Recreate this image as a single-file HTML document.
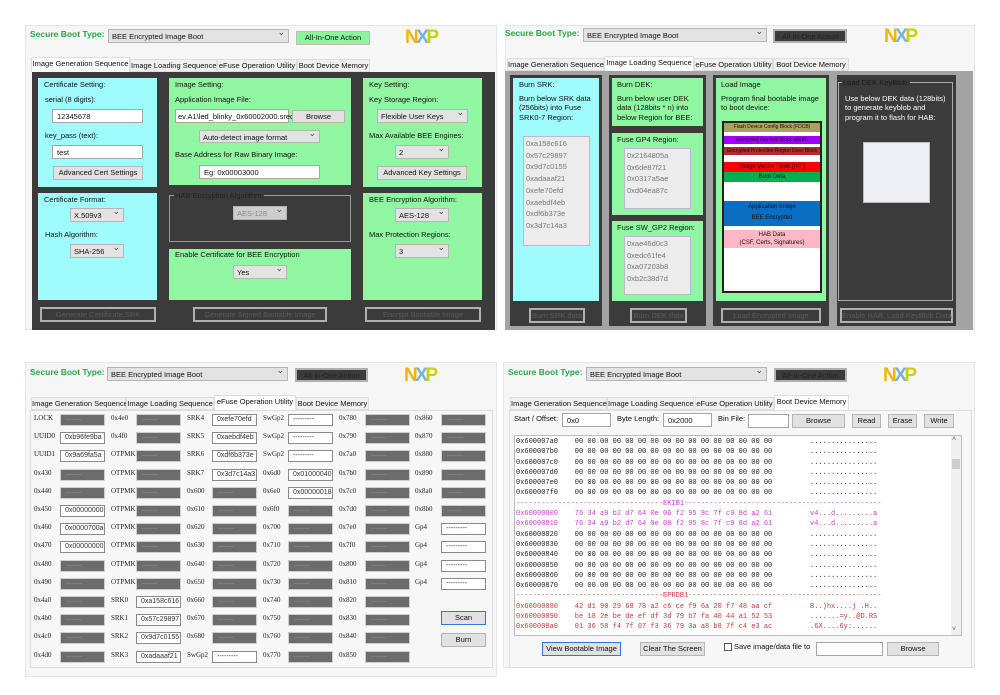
<!DOCTYPE html>
<html><head><meta charset="utf-8"><style>
*{margin:0;padding:0;box-sizing:border-box}
body{width:1000px;height:695px;background:#fff;position:relative;overflow:hidden;font-family:"Liberation Sans",sans-serif;font-size:8px;color:#111}
div,span{position:absolute;white-space:nowrap}
.pn{background:#f6f6f6;border:1px solid #e6e6e6}
.lab{color:#27a745;font-weight:bold;font-size:8.5px}
.cb{background:#e3e3e3;border:1px solid #b5b5b5;height:14px;padding:2px 3px;font-size:7.5px;line-height:9px}
.cb:after{content:"⌄";position:absolute;right:3px;top:-2px;font-size:9px;color:#444}
.ab{height:14px;font-size:7.5px;text-align:center;line-height:11px}
.nxp{font-weight:bold;font-size:19px;letter-spacing:-2.5px;font-family:"Liberation Sans",sans-serif}
.tab{top:0;height:13px;background:#f0f0f0;border:1px solid #ddd;font-size:7.5px;line-height:11px;text-align:center}
.tab.a{background:#fff;height:15px;border-bottom:none}
.cy{background:#a0fbfc}
.gr{background:#90f6a2}
.dk{background:#3b3b3b}
.tx{font-size:7.5px;line-height:9.3px}
.in{background:#fff;border:1px solid #a5a5a5;height:14px;padding:2px 4px;font-size:7.5px;line-height:9px}
.bt{background:#e1e1e1;border:1px solid #b5b5b5;height:14px;font-size:7.5px;line-height:12px;text-align:center}
.db{background:#3b3b3b;border:2px solid #b0b0b0;height:15px;font-size:7.5px;line-height:11px;text-align:center;color:#5a5a5a}
.lb{background:#ececec;border:1px solid #b9b9d0;color:#777;font-size:7.5px;line-height:11.7px;padding:1px 2px}
.fl{font-size:7px;font-family:"Liberation Serif",serif;color:#222}
.k{background:#6c6c6c;border:1px solid #cfcfcf;width:45px;height:12px;font-size:6px;color:#9a9a9a;line-height:10px;padding-left:5px}
.v{background:#fff;border:1px solid #8a8a8a;width:45px;height:12px;font-size:7px;color:#333;line-height:10px;padding-left:4px}
.mono{font-family:"Liberation Mono",monospace;font-size:7px;line-height:10.3px;white-space:pre}
.mono span{white-space:pre}
.band{left:0;width:96px;font-size:5px;text-align:center;font-family:"Liberation Sans",sans-serif}
</style></head><body>

<!-- ============ Q1 ============ -->
<div class="pn" style="left:25px;top:25px;width:472px;height:305px"></div>
<div class="lab" style="left:30px;top:29px">Secure Boot Type:</div>
<div class="cb" style="left:108px;top:29px;width:181px">BEE Encrypted Image Boot</div>
<div class="ab" style="left:296px;top:31px;width:74px;background:#8cf59e;border:1px solid #bbb">All-In-One Action</div>
<div class="nxp" style="left:405px;top:27px"><span style="position:static;color:#f6b400">N</span><span style="position:static;color:#79b0dc">X</span><span style="position:static;color:#c6d300">P</span></div>
<div style="left:31px;top:57px;width:340px;height:16px">
<div class="tab a" style="left:0;top:0;width:99px">Image Generation Sequence</div>
<div class="tab" style="left:99px;top:2px;width:87px">Image Loading Sequence</div>
<div class="tab" style="left:186px;top:2px;width:80px">eFuse Operation Utility</div>
<div class="tab" style="left:266px;top:2px;width:73px">Boot Device Memory</div>
</div>
<div class="dk" style="left:32px;top:72px;width:463px;height:258px"></div>
<div class="cy" style="left:38px;top:78px;width:119px;height:109px"></div>
<div class="tx" style="left:44px;top:80px">Certificate Setting:</div>
<div class="tx" style="left:45px;top:95px">serial (8 digits):</div>
<div class="in" style="left:52px;top:109px;width:91px">12345678</div>
<div class="tx" style="left:45px;top:131px">key_pass (text):</div>
<div class="in" style="left:52px;top:145px;width:91px">test</div>
<div class="bt" style="left:53px;top:166px;width:90px">Advanced Cert Settings</div>

<div class="gr" style="left:169px;top:78px;width:182px;height:107px"></div>
<div class="tx" style="left:175px;top:80px">Image Setting:</div>
<div class="tx" style="left:175px;top:95px">Application Image File:</div>
<div class="in" style="left:175px;top:109px;width:114px;padding-left:2px">ev.A1\led_blinky_0x60002000.srec</div>
<div class="bt" style="left:292px;top:110px;width:53px;height:13px">Browse</div>
<div class="cb" style="left:199px;top:130px;width:121px;height:13px">Auto-detect image format</div>
<div class="tx" style="left:175px;top:150px">Base Address for Raw Binary Image:</div>
<div class="in" style="left:199px;top:165px;width:121px">Eg: 0x00003000</div>

<div class="gr" style="left:363px;top:78px;width:119px;height:109px"></div>
<div class="tx" style="left:369px;top:80px">Key Setting:</div>
<div class="tx" style="left:369px;top:95px">Key Storage Region:</div>
<div class="cb" style="left:377px;top:109px;width:91px">Flexible User Keys</div>
<div class="tx" style="left:369px;top:131px">Max Available BEE Engines:</div>
<div class="cb" style="left:395px;top:145px;width:54px">2</div>
<div class="bt" style="left:377px;top:166px;width:90px">Advanced Key Settings</div>

<div class="cy" style="left:38px;top:193px;width:119px;height:107px"></div>
<div class="tx" style="left:44px;top:195px">Certificate Format:</div>
<div class="cb" style="left:70px;top:208px;width:54px">X.509v3</div>
<div class="tx" style="left:45px;top:230px">Hash Algorithm:</div>
<div class="cb" style="left:70px;top:244px;width:54px">SHA-256</div>

<div style="left:169px;top:195px;width:182px;height:47px;border:1px solid #9a9a9a"></div>
<div class="tx" style="left:174px;top:191px;background:#3b3b3b;color:#222;padding:0 1px">HAB Encryption Algorithm:</div>
<div class="cb" style="left:233px;top:206px;width:54px;background:#cdcdcd;color:#8a8a8a">AES-128</div>

<div class="gr" style="left:169px;top:249px;width:182px;height:51px"></div>
<div class="tx" style="left:175px;top:250px">Enable Certificate for BEE Encryption</div>
<div class="cb" style="left:233px;top:265px;width:54px">Yes</div>

<div class="gr" style="left:363px;top:193px;width:119px;height:107px"></div>
<div class="tx" style="left:369px;top:195px">BEE Encryption Algorithm:</div>
<div class="cb" style="left:395px;top:208px;width:54px">AES-128</div>
<div class="tx" style="left:369px;top:230px">Max Protection Regions:</div>
<div class="cb" style="left:395px;top:244px;width:54px">3</div>

<div class="db" style="left:40px;top:307px;width:116px">Generate Certificate,SRK</div>
<div class="db" style="left:193px;top:307px;width:134px">Generate Signed Bootable Image</div>
<div class="db" style="left:365px;top:307px;width:116px">Encrypt Bootable Image</div>

<!-- ============ Q2 ============ -->
<div class="pn" style="left:505px;top:25px;width:470px;height:305px"></div>
<div class="lab" style="left:505px;top:28px">Secure Boot Type:</div>
<div class="cb" style="left:583px;top:28px;width:184px">BEE Encrypted Image Boot</div>
<div class="ab" style="left:773px;top:29px;width:74px;background:#3b3b3b;border:2px solid #b0b0b0;color:#222">All-In-One Action</div>
<div class="nxp" style="left:884px;top:26px"><span style="position:static;color:#f6b400">N</span><span style="position:static;color:#79b0dc">X</span><span style="position:static;color:#c6d300">P</span></div>
<div style="left:507px;top:56px;width:345px;height:16px">
<div class="tab" style="left:0;top:2px;width:97px">Image Generation Sequence</div>
<div class="tab a" style="left:97px;top:0;width:90px">Image Loading Sequence</div>
<div class="tab" style="left:187px;top:2px;width:79px">eFuse Operation Utility</div>
<div class="tab" style="left:266px;top:2px;width:76px">Boot Device Memory</div>
</div>
<div style="left:505px;top:71px;width:468px;height:259px;background:#a3a3a3"></div>
<div class="dk" style="left:510px;top:75px;width:92px;height:251px"></div>
<div class="dk" style="left:609px;top:75px;width:97px;height:251px"></div>
<div class="dk" style="left:713px;top:75px;width:116px;height:251px"></div>
<div class="dk" style="left:837px;top:75px;width:119px;height:251px"></div>

<div class="cy" style="left:513px;top:78px;width:86px;height:223px"></div>
<div class="tx" style="left:519px;top:80px">Burn SRK:</div>
<div class="tx" style="left:519px;top:94px">Burn below SRK data<br>(256bits) into Fuse<br>SRK0-7 Region:</div>
<div class="lb" style="left:523px;top:136px;width:67px;height:110px">0xa158c616<br>0x57c29897<br>0x9d7c0155<br>0xadaaaf21<br>0xefe70efd<br>0xaebdf4eb<br>0xdf6b373e<br>0x3d7c14a3</div>

<div class="gr" style="left:612px;top:78px;width:91px;height:48px"></div>
<div class="tx" style="left:617px;top:80px">Burn DEK:</div>
<div class="tx" style="left:617px;top:94px">Burn below user DEK<br>data (128bits * n) into<br>below Region for BEE:</div>
<div class="gr" style="left:612px;top:133px;width:91px;height:82px"></div>
<div class="tx" style="left:617px;top:135px">Fuse GP4 Region:</div>
<div class="lb" style="left:624px;top:148px;width:67px;height:61px">0x2164805a<br>0x6de87f21<br>0x0317a5ae<br>0xd04ea87c</div>
<div class="gr" style="left:612px;top:221px;width:91px;height:80px"></div>
<div class="tx" style="left:617px;top:223px">Fuse SW_GP2 Region:</div>
<div class="lb" style="left:624px;top:236px;width:67px;height:59px">0xae46d0c3<br>0xedc61fe4<br>0xa07203b8<br>0xb2c38d7d</div>

<div class="gr" style="left:716px;top:78px;width:110px;height:223px"></div>
<div class="tx" style="left:721px;top:80px">Load Image</div>
<div class="tx" style="left:721px;top:94px">Program final bootable image<br>to boot device:</div>
<div style="left:722px;top:121px;width:100px;height:172px;background:#fff;border:2px solid #222">
<div class="band" style="top:0;height:9px;background:#a7a35e;line-height:9px">Flash Device Config Block (FDCB)</div>
<div class="band" style="top:13px;height:8px;background:#a100ff;line-height:8px">Encrypted Key Info Block (EKIB)</div>
<div class="band" style="top:24px;height:8px;background:#b12b2b;line-height:8px">Encrypted Protection Region Desc Block</div>
<div class="band" style="top:39px;height:10px;background:#ff0000;line-height:10px;font-size:6px">Image Vector Table (IVT)</div>
<div class="band" style="top:49px;height:10px;background:#00b050;line-height:10px;font-size:6px">Boot Data</div>
<div class="band" style="top:78px;height:25px;background:#0a6fc2;line-height:11px;font-size:6px;padding-top:1px">Application Image<br>BEE Encrypted</div>
<div class="band" style="top:107px;height:18px;background:#ffb7c5;line-height:8px;font-size:6px;padding-top:1px">HAB Data<br>(CSF, Certs, Signatures)</div>
</div>

<div style="left:838px;top:82px;width:115px;height:219px;border:1px solid #aaa"></div>
<div class="tx" style="left:842px;top:78px;background:#3b3b3b;color:#1a1a1a;padding:0 1px">Load DEK KeyBlob:</div>
<div class="tx" style="left:845px;top:94px;color:#fff">Use below DEK data (128bits)<br>to generate keyblob and<br>program it to flash for HAB:</div>
<div style="left:863px;top:142px;width:67px;height:61px;background:#eef0f6;border:1px solid #bbb"></div>

<div class="db" style="left:529px;top:308px;width:56px">Burn SRK data</div>
<div class="db" style="left:630px;top:308px;width:57px">Burn DEK data</div>
<div class="db" style="left:721px;top:308px;width:100px">Load Encrypted Image</div>
<div class="db" style="left:840px;top:308px;width:113px">Enable HAB, Load KeyBlob Data</div>

<!-- ============ Q3 ============ -->
<div class="pn" style="left:25px;top:362px;width:472px;height:315px"></div>
<div class="lab" style="left:30px;top:367px">Secure Boot Type:</div>
<div class="cb" style="left:107px;top:367px;width:181px">BEE Encrypted Image Boot</div>
<div class="ab" style="left:295px;top:368px;width:73px;background:#3b3b3b;border:2px solid #b0b0b0;color:#222">All-In-One Action</div>
<div class="nxp" style="left:404px;top:365px"><span style="position:static;color:#f6b400">N</span><span style="position:static;color:#79b0dc">X</span><span style="position:static;color:#c6d300">P</span></div>
<div style="left:31px;top:395px;width:345px;height:16px">
<div class="tab" style="left:0;top:2px;width:95px">Image Generation Sequence</div>
<div class="tab" style="left:95px;top:2px;width:88px">Image Loading Sequence</div>
<div class="tab a" style="left:183px;top:0;width:82px">eFuse Operation Utility</div>
<div class="tab" style="left:265px;top:2px;width:73px">Boot Device Memory</div>
</div>
<div style="left:30px;top:410px;width:463px;height:258px;border:1px solid #ddd;background:#f7f7f7"></div>

<!-- col1 -->
<div class="fl" style="left:34px;top:414px">LOCK</div><div class="k" style="left:60px;top:414px">--------</div>
<div class="fl" style="left:34px;top:432px">UUID0</div><div class="v" style="left:60px;top:432px">0xb96fe9ba</div>
<div class="fl" style="left:34px;top:450px">UUID1</div><div class="v" style="left:60px;top:450px">0x9a69fa5a</div>
<div class="fl" style="left:34px;top:469px">0x430</div><div class="k" style="left:60px;top:469px">--------</div>
<div class="fl" style="left:34px;top:487px">0x440</div><div class="k" style="left:60px;top:487px">--------</div>
<div class="fl" style="left:34px;top:505px">0x450</div><div class="v" style="left:60px;top:505px">0x00000000</div>
<div class="fl" style="left:34px;top:523px">0x460</div><div class="v" style="left:60px;top:523px">0x0000700a</div>
<div class="fl" style="left:34px;top:541px">0x470</div><div class="v" style="left:60px;top:541px">0x00000000</div>
<div class="fl" style="left:34px;top:560px">0x480</div><div class="k" style="left:60px;top:560px">--------</div>
<div class="fl" style="left:34px;top:578px">0x490</div><div class="k" style="left:60px;top:578px">--------</div>
<div class="fl" style="left:34px;top:596px">0x4a0</div><div class="k" style="left:60px;top:596px">--------</div>
<div class="fl" style="left:34px;top:614px">0x4b0</div><div class="k" style="left:60px;top:614px">--------</div>
<div class="fl" style="left:34px;top:632px">0x4c0</div><div class="k" style="left:60px;top:632px">--------</div>
<div class="fl" style="left:34px;top:651px">0x4d0</div><div class="k" style="left:60px;top:651px">--------</div>
<!-- col2 -->
<div class="fl" style="left:111px;top:414px">0x4e0</div><div class="k" style="left:136px;top:414px">--------</div>
<div class="fl" style="left:111px;top:432px">0x4f0</div><div class="k" style="left:136px;top:432px">--------</div>
<div class="fl" style="left:111px;top:450px">OTPMK</div><div class="k" style="left:136px;top:450px">--------</div>
<div class="fl" style="left:111px;top:469px">OTPMK</div><div class="k" style="left:136px;top:469px">--------</div>
<div class="fl" style="left:111px;top:487px">OTPMK</div><div class="k" style="left:136px;top:487px">--------</div>
<div class="fl" style="left:111px;top:505px">OTPMK</div><div class="k" style="left:136px;top:505px">--------</div>
<div class="fl" style="left:111px;top:523px">OTPMK</div><div class="k" style="left:136px;top:523px">--------</div>
<div class="fl" style="left:111px;top:541px">OTPMK</div><div class="k" style="left:136px;top:541px">--------</div>
<div class="fl" style="left:111px;top:560px">OTPMK</div><div class="k" style="left:136px;top:560px">--------</div>
<div class="fl" style="left:111px;top:578px">OTPMK</div><div class="k" style="left:136px;top:578px">--------</div>
<div class="fl" style="left:111px;top:596px">SRK0</div><div class="v" style="left:136px;top:596px">0xa158c616</div>
<div class="fl" style="left:111px;top:614px">SRK1</div><div class="v" style="left:136px;top:614px">0x57c29897</div>
<div class="fl" style="left:111px;top:632px">SRK2</div><div class="v" style="left:136px;top:632px">0x9d7c0155</div>
<div class="fl" style="left:111px;top:651px">SRK3</div><div class="v" style="left:136px;top:651px">0xadaaaf21</div>
<!-- col3 -->
<div class="fl" style="left:187px;top:414px">SRK4</div><div class="v" style="left:212px;top:414px">0xefe70efd</div>
<div class="fl" style="left:187px;top:432px">SRK5</div><div class="v" style="left:212px;top:432px">0xaebdf4eb</div>
<div class="fl" style="left:187px;top:450px">SRK6</div><div class="v" style="left:212px;top:450px">0xdf6b373e</div>
<div class="fl" style="left:187px;top:469px">SRK7</div><div class="v" style="left:212px;top:469px">0x3d7c14a3</div>
<div class="fl" style="left:187px;top:487px">0x600</div><div class="k" style="left:212px;top:487px">--------</div>
<div class="fl" style="left:187px;top:505px">0x610</div><div class="k" style="left:212px;top:505px">--------</div>
<div class="fl" style="left:187px;top:523px">0x620</div><div class="k" style="left:212px;top:523px">--------</div>
<div class="fl" style="left:187px;top:541px">0x630</div><div class="k" style="left:212px;top:541px">--------</div>
<div class="fl" style="left:187px;top:560px">0x640</div><div class="k" style="left:212px;top:560px">--------</div>
<div class="fl" style="left:187px;top:578px">0x650</div><div class="k" style="left:212px;top:578px">--------</div>
<div class="fl" style="left:187px;top:596px">0x660</div><div class="k" style="left:212px;top:596px">--------</div>
<div class="fl" style="left:187px;top:614px">0x670</div><div class="k" style="left:212px;top:614px">--------</div>
<div class="fl" style="left:187px;top:632px">0x680</div><div class="k" style="left:212px;top:632px">--------</div>
<div class="fl" style="left:187px;top:651px">SwGp2</div><div class="v" style="left:212px;top:651px">---------</div>
<!-- col4 -->
<div class="fl" style="left:263px;top:414px">SwGp2</div><div class="v" style="left:288px;top:414px">---------</div>
<div class="fl" style="left:263px;top:432px">SwGp2</div><div class="v" style="left:288px;top:432px">---------</div>
<div class="fl" style="left:263px;top:450px">SwGp2</div><div class="v" style="left:288px;top:450px">---------</div>
<div class="fl" style="left:263px;top:469px">0x6d0</div><div class="v" style="left:288px;top:469px">0x01000040</div>
<div class="fl" style="left:263px;top:487px">0x6e0</div><div class="v" style="left:288px;top:487px">0x00000018</div>
<div class="fl" style="left:263px;top:505px">0x6f0</div><div class="k" style="left:288px;top:505px">--------</div>
<div class="fl" style="left:263px;top:523px">0x700</div><div class="k" style="left:288px;top:523px">--------</div>
<div class="fl" style="left:263px;top:541px">0x710</div><div class="k" style="left:288px;top:541px">--------</div>
<div class="fl" style="left:263px;top:560px">0x720</div><div class="k" style="left:288px;top:560px">--------</div>
<div class="fl" style="left:263px;top:578px">0x730</div><div class="k" style="left:288px;top:578px">--------</div>
<div class="fl" style="left:263px;top:596px">0x740</div><div class="k" style="left:288px;top:596px">--------</div>
<div class="fl" style="left:263px;top:614px">0x750</div><div class="k" style="left:288px;top:614px">--------</div>
<div class="fl" style="left:263px;top:632px">0x760</div><div class="k" style="left:288px;top:632px">--------</div>
<div class="fl" style="left:263px;top:651px">0x770</div><div class="k" style="left:288px;top:651px">--------</div>
<!-- col5 -->
<div class="fl" style="left:339px;top:414px">0x780</div><div class="k" style="left:365px;top:414px">--------</div>
<div class="fl" style="left:339px;top:432px">0x790</div><div class="k" style="left:365px;top:432px">--------</div>
<div class="fl" style="left:339px;top:450px">0x7a0</div><div class="k" style="left:365px;top:450px">--------</div>
<div class="fl" style="left:339px;top:469px">0x7b0</div><div class="k" style="left:365px;top:469px">--------</div>
<div class="fl" style="left:339px;top:487px">0x7c0</div><div class="k" style="left:365px;top:487px">--------</div>
<div class="fl" style="left:339px;top:505px">0x7d0</div><div class="k" style="left:365px;top:505px">--------</div>
<div class="fl" style="left:339px;top:523px">0x7e0</div><div class="k" style="left:365px;top:523px">--------</div>
<div class="fl" style="left:339px;top:541px">0x7f0</div><div class="k" style="left:365px;top:541px">--------</div>
<div class="fl" style="left:339px;top:560px">0x800</div><div class="k" style="left:365px;top:560px">--------</div>
<div class="fl" style="left:339px;top:578px">0x810</div><div class="k" style="left:365px;top:578px">--------</div>
<div class="fl" style="left:339px;top:596px">0x820</div><div class="k" style="left:365px;top:596px">--------</div>
<div class="fl" style="left:339px;top:614px">0x830</div><div class="k" style="left:365px;top:614px">--------</div>
<div class="fl" style="left:339px;top:632px">0x840</div><div class="k" style="left:365px;top:632px">--------</div>
<div class="fl" style="left:339px;top:651px">0x850</div><div class="k" style="left:365px;top:651px">--------</div>
<!-- col6 -->
<div class="fl" style="left:415px;top:414px">0x860</div><div class="k" style="left:441px;top:414px">--------</div>
<div class="fl" style="left:415px;top:432px">0x870</div><div class="k" style="left:441px;top:432px">--------</div>
<div class="fl" style="left:415px;top:450px">0x880</div><div class="k" style="left:441px;top:450px">--------</div>
<div class="fl" style="left:415px;top:469px">0x890</div><div class="k" style="left:441px;top:469px">--------</div>
<div class="fl" style="left:415px;top:487px">0x8a0</div><div class="k" style="left:441px;top:487px">--------</div>
<div class="fl" style="left:415px;top:505px">0x8b0</div><div class="k" style="left:441px;top:505px">--------</div>
<div class="fl" style="left:415px;top:523px">Gp4</div><div class="v" style="left:441px;top:523px">---------</div>
<div class="fl" style="left:415px;top:541px">Gp4</div><div class="v" style="left:441px;top:541px">---------</div>
<div class="fl" style="left:415px;top:560px">Gp4</div><div class="v" style="left:441px;top:560px">---------</div>
<div class="fl" style="left:415px;top:578px">Gp4</div><div class="v" style="left:441px;top:578px">---------</div>
<div class="bt" style="left:441px;top:611px;width:45px;border:1px solid #2b78d8">Scan</div>
<div class="bt" style="left:441px;top:633px;width:45px">Burn</div>

<!-- ============ Q4 ============ -->
<div class="pn" style="left:503px;top:362px;width:472px;height:306px"></div>
<div class="lab" style="left:508px;top:367px">Secure Boot Type:</div>
<div class="cb" style="left:586px;top:367px;width:181px">BEE Encrypted Image Boot</div>
<div class="ab" style="left:774px;top:368px;width:73px;background:#3b3b3b;border:2px solid #b0b0b0;color:#222">All-In-One Action</div>
<div class="nxp" style="left:883px;top:365px"><span style="position:static;color:#f6b400">N</span><span style="position:static;color:#79b0dc">X</span><span style="position:static;color:#c6d300">P</span></div>
<div style="left:510px;top:395px;width:345px;height:16px">
<div class="tab" style="left:0;top:2px;width:97px">Image Generation Sequence</div>
<div class="tab" style="left:97px;top:2px;width:87px">Image Loading Sequence</div>
<div class="tab" style="left:185px;top:2px;width:79px">eFuse Operation Utility</div>
<div class="tab a" style="left:264px;top:0;width:75px">Boot Device Memory</div>
</div>
<div style="left:509px;top:410px;width:463px;height:258px;border:1px solid #ddd;background:#f7f7f7"></div>
<div class="tx" style="left:514px;top:414px">Start / Offset:</div>
<div class="in" style="left:562px;top:413px;width:49px">0x0</div>
<div class="tx" style="left:617px;top:414px">Byte Length:</div>
<div class="in" style="left:663px;top:413px;width:49px">0x2000</div>
<div class="tx" style="left:718px;top:414px">Bin File:</div>
<div class="in" style="left:748px;top:414px;width:41px"></div>
<div class="bt" style="left:792px;top:414px;width:53px">Browse</div>
<div class="bt" style="left:852px;top:414px;width:29px">Read</div>
<div class="bt" style="left:888px;top:414px;width:29px">Erase</div>
<div class="bt" style="left:924px;top:414px;width:30px">Write</div>

<div style="left:514px;top:435px;width:448px;height:201px;background:#fff;border:1px solid #bbb"></div>
<div style="left:951px;top:436px;width:10px;height:199px;background:#f0f0f0"></div>
<div style="left:952px;top:459px;width:8px;height:10px;background:#cdcdcd"></div>
<div style="left:952px;top:436px;font-size:7px;color:#555">˄</div>
<div style="left:952px;top:626px;font-size:7px;color:#555">˅</div>
<div class="mono" style="left:516px;top:437px;color:#222">0x600007a0    00 00 00 00 00 00 00 00 00 00 00 00 00 00 00 00         ................
0x600007b0    00 00 00 00 00 00 00 00 00 00 00 00 00 00 00 00         ................
0x600007c0    00 00 00 00 00 00 00 00 00 00 00 00 00 00 00 00         ................
0x600007d0    00 00 00 00 00 00 00 00 00 00 00 00 00 00 00 00         ................
0x600007e0    00 00 00 00 00 00 00 00 00 00 00 00 00 00 00 00         ................
0x600007f0    00 00 00 00 00 00 00 00 00 00 00 00 00 00 00 00         ................
<span style="position:static;color:#d33ad8">-----------------------------------EKIB1-----------------------------------------------</span>
<span style="position:static;color:#d33ad8">0x60000800    76 34 a9 b2 d7 64 0e 06 f2 95 8c 7f c9 8d a2 61         v4...d.........a</span>
<span style="position:static;color:#d33ad8">0x60000810    76 34 a9 b2 d7 64 0e 06 f2 95 8c 7f c9 8d a2 61         v4...d.........a</span>
0x60000820    00 00 00 00 00 00 00 00 00 00 00 00 00 00 00 00         ................
0x60000830    00 00 00 00 00 00 00 00 00 00 00 00 00 00 00 00         ................
0x60000840    00 00 00 00 00 00 00 00 00 00 00 00 00 00 00 00         ................
0x60000850    00 00 00 00 00 00 00 00 00 00 00 00 00 00 00 00         ................
0x60000860    00 00 00 00 00 00 00 00 00 00 00 00 00 00 00 00         ................
0x60000870    00 00 00 00 00 00 00 00 00 00 00 00 00 00 00 00         ................
<span style="position:static;color:#c63a3a">-----------------------------------EPRDB1----------------------------------------------</span>
<span style="position:static;color:#c63a3a">0x60000880    42 d1 90 29 68 78 a2 c6 ce f9 6a 20 f7 48 aa cf         B..)hx....j .H..</span>
<span style="position:static;color:#c63a3a">0x60000890    be 18 2e be de ef df 3d 79 b7 fa 40 44 a1 52 53         .......=y..@D.RS</span>
<span style="position:static;color:#c63a3a">0x600008a0    01 36 58 f4 7f 07 f3 36 79 3a a8 b8 7f c4 e3 ac         .6X....6y:......</span></div>

<div class="bt" style="left:542px;top:642px;width:79px;border:1px solid #2b78d8">View Bootable Image</div>
<div class="bt" style="left:640px;top:642px;width:65px">Clear The Screen</div>
<div style="left:724px;top:643px;width:8px;height:8px;border:1px solid #555;background:#fff"></div>
<div class="tx" style="left:734px;top:642px">Save image/data file to</div>
<div class="in" style="left:816px;top:642px;width:67px"></div>
<div class="bt" style="left:887px;top:642px;width:52px">Browse</div>
</body></html>
